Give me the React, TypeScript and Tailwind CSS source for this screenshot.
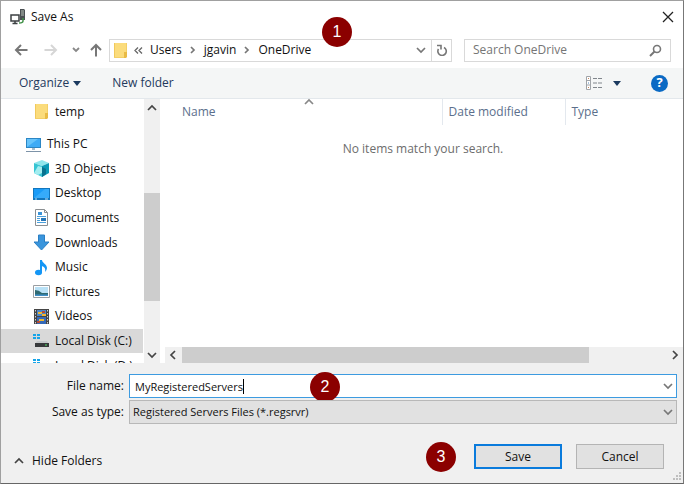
import type { ReactNode } from "react";

interface TreeItem {
    label: string;
    icon: ReactNode;
    selected?: boolean;
}

function FolderIcon() {
    return (
        <svg width="17" height="17" viewBox="0 0 17 17">
            <path d="M2 1h12v15H2z" fill="#fbdc7c" />
            <path d="M2 1h1v15H2z" fill="#f1c95c" />
            <path d="M2 15h10v1H2zM14 1h1v9h-1z" fill="#f3cf68" />
            <path d="M12 10h3v5l-1 1h-2z" fill="#e9bb45" />
        </svg>
    );
}

function ServerIcon() {
    return (
        <svg width="16" height="16" viewBox="0 0 16 16">
            <path d="M10 0h4l1 1v10h-5z" fill="#4a4f52" />
            <path d="M11 2h3M11 4h3M11 6h3" stroke="#b9c4b9" />
            <path d="M1 6h8v6H1z" fill="#fff" stroke="#3c4043" strokeWidth="1.5" />
            <path d="M2.500 14.500h5M5 12v2" stroke="#3c4043" strokeWidth="1.500" />
            <path d="M13 9v3q0 2-4 2" fill="none" stroke="#43934a" strokeWidth="1.500" />
        </svg>
    );
}

function PcIcon() {
    return (
        <svg width="17" height="17" viewBox="0 0 17 17">
            <path d="M1 2h15v10H1z" fill="#2c86c4" />
            <path d="M2 3h13v8H2z" fill="#3fabf5" />
            <path d="M2 11V3h11z" fill="#67c4fb" />
            <path d="M7 12h3v2H7z" fill="#a8bccb" />
            <path d="M1 15.500h15" stroke="#7d93a8" />
        </svg>
    );
}

function CubeIcon() {
    return (
        <svg width="17" height="17" viewBox="0 0 17 17">
            <path d="M1 3l8-3 7 3-7 3z" fill="#8fe6ec" />
            <path d="M1 3l8 3v11l-8-4z" fill="#36c5d3" />
            <path d="M9 6l7-3v10l-7 4z" fill="#0999b5" />
            <path d="M1 13l4-7 4 1v6l-4 2z" fill="#a3edf0" />
            <path d="M9 7l4 2v5l-4 3z" fill="#08728f" />
        </svg>
    );
}

function DesktopIcon() {
    return (
        <svg width="17" height="17" viewBox="0 0 17 17">
            <path d="M0 3h17v12H0z" fill="#1276bd" />
            <path d="M1 4h15v9H1z" fill="#199bf7" />
            <path d="M1 13L12 4h4v9z" fill="#36abfa" />
            <path d="M2 14h2M12 14h3" stroke="#b7dff8" />
        </svg>
    );
}

function DocumentIcon() {
    return (
        <svg width="17" height="17" viewBox="0 0 17 17">
            <path d="M2.500 .5h9l3 3v13h-12z" fill="#fff" stroke="#8b8f92" />
            <path d="M11.500 .5v3h3" fill="none" stroke="#8b8f92" />
            <path d="M5 3h4v3H5z" fill="#3c94d8" />
            <path d="M4 7.500h9M4 9.500h3M4 11.500h3M4 13.500h9" stroke="#4ba0dc" />
            <path d="M8 9h5v3H8z" fill="#2676b8" />
        </svg>
    );
}

function DownloadIcon() {
    return (
        <svg width="17" height="17" viewBox="0 0 17 17">
            <path d="M5.500 1h6v7h4.500L8.500 16 1 8h4.500z" fill="#3a95dc" stroke="#2a7fc4" />
        </svg>
    );
}

function MusicIcon() {
    return (
        <svg width="17" height="17" viewBox="0 0 17 17">
            <ellipse cx="5.500" cy="13.500" rx="3.500" ry="2.700" fill="#1496f5" />
            <path d="M7 1h2c0 3 5 4 5 8q0 2-2 4c1-4-1-5-3-6v7H7z" fill="#1496f5" />
        </svg>
    );
}

function PictureIcon() {
    return (
        <svg width="17" height="17" viewBox="0 0 17 17">
            <path d="M.5 2.500h16v12H.5z" fill="#fff" stroke="#999ea2" />
            <path d="M2 4h13v9H2z" fill="#b9e1f6" />
            <path d="M2 7q4 0 7 3h6v3H2z" fill="#2f6a72" />
            <path d="M2 11.500h13V13H2z" fill="#3f8fc8" />
        </svg>
    );
}

function VideoIcon() {
    return (
        <svg width="17" height="17" viewBox="0 0 17 17">
            <path d="M1 1h15v15H1z" fill="#454545" />
            <path d="M2.500 2v14M14.500 2v14" stroke="#cfcfcf" strokeDasharray="1.500 1.500" />
            <path d="M4 2h9v6H4z" fill="#4b86c9" />
            <path d="M4 9h9v7H4z" fill="#3569b8" />
            <path d="M5 4h4v2H5zM9 6h4v2H9zM6 11h5v2H6z" fill="#f0b833" />
            <path d="M9 3h3v2H9zM4 13h3v2H4z" fill="#b44a36" />
        </svg>
    );
}

function DiskIcon() {
    return (
        <svg width="17" height="17" viewBox="0 0 17 17">
            <path d="M0 2h3v2H0zM4 2h3v2H4zM0 5h3v2H0zM4 5h3v2H4z" fill="#16a5e9" />
            <path d="M4 9h10l2 3H2z" fill="#c5c8ca" />
            <path d="M2 11h14v4H2z" fill="#37393b" />
            <path d="M12 13h2" stroke="#55e06a" />
        </svg>
    );
}

function Chevron({ d, className }: { d: string; className: string }) {
    return (
        <svg width="10" height="10" viewBox="0 0 10 10" className={className}>
            <path d={d} fill="none" stroke="currentColor" strokeWidth="1.700" />
        </svg>
    );
}

const UP = "M1 7l4-4 4 4";
const DOWN = "M1 3l4 4 4-4";
const LEFT = "M7 1L3 5l4 4";
const RIGHT = "M3 1l4 4-4 4";

function StepBadge({ step, className }: { step: number; className: string }) {
    return (
        <span
            className={`flex size-[30px] items-center justify-center rounded-full bg-[#8b0000] font-['Liberation_Sans',sans-serif] text-base text-white ${className}`}
        >
            {step}
        </span>
    );
}

const pcItems: TreeItem[] = [
    { label: "3D Objects", icon: <CubeIcon /> },
    { label: "Desktop", icon: <DesktopIcon /> },
    { label: "Documents", icon: <DocumentIcon /> },
    { label: "Downloads", icon: <DownloadIcon /> },
    { label: "Music", icon: <MusicIcon /> },
    { label: "Pictures", icon: <PictureIcon /> },
    { label: "Videos", icon: <VideoIcon /> },
    { label: "Local Disk (C:)", icon: <DiskIcon />, selected: true },
];

function TreeRow({ label, icon, selected }: TreeItem) {
    return (
        <li className={`flex flex-1 items-center gap-[5px] pl-8 whitespace-nowrap ${selected ? "bg-[#d9d9d9]" : ""}`}>
            {icon}
            {label}
        </li>
    );
}

function TitleBar() {
    return (
        <header className="flex h-[31px] shrink-0 items-center pr-2 pl-[9px]">
            <ServerIcon />
            <h1 className="ml-[5px]">Save As</h1>
            <button aria-label="Close" className="ml-auto text-[#222]">
                <svg width="14" height="14" viewBox="0 0 14 14">
                    <path d="M2 2l10 10M12 2L2 12" stroke="currentColor" strokeWidth="1.300" />
                </svg>
            </button>
        </header>
    );
}

function NavigationBar() {
    return (
        <nav className="flex h-9 shrink-0 items-center pr-3 pl-[13px]">
            <button aria-label="Back" className="text-[#777]">
                <svg width="14" height="14" viewBox="0 0 14 14">
                    <path d="M13.500 7H2M7 2L2 7l5 5" fill="none" stroke="currentColor" strokeWidth="2" />
                </svg>
            </button>
            <button aria-label="Forward" className="ml-4 text-[#d6d6d6]">
                <svg width="14" height="14" viewBox="0 0 14 14">
                    <path d="M.5 7H12M7 2l5 5-5 5" fill="none" stroke="currentColor" strokeWidth="2" />
                </svg>
            </button>
            <button aria-label="Recent locations" className="ml-3 text-[#888]">
                <svg width="12" height="12" viewBox="0 0 12 12">
                    <path d="M3 4l3 3 3-3" fill="none" stroke="currentColor" strokeWidth="1.800" />
                </svg>
            </button>
            <button aria-label="Up" className="ml-[7px] text-[#777]">
                <svg width="14" height="14" viewBox="0 0 14 14">
                    <path d="M7 13.500V2M2 7l5-5 5 5" fill="none" stroke="currentColor" strokeWidth="2" />
                </svg>
            </button>
            <div className="relative ml-[6px] flex h-[23px] min-w-0 flex-1 items-center border border-[#d9d9d9] pl-[2px]">
                <FolderIcon />
                <svg width="9" height="9" viewBox="0 0 9 9" className="ml-[5px] text-[#666]">
                    <path d="M4 1.500l-3 3 3 3M8 1.500l-3 3 3 3" fill="none" stroke="currentColor" strokeWidth="1.300" />
                </svg>
                <button className="ml-[7px]">Users</button>
                <Chevron d="M3 2l3 3-3 3" className="mx-[6px] text-[#777]" />
                <button>jgavin</button>
                <Chevron d="M3 2l3 3-3 3" className="mx-[6px] text-[#777]" />
                <button>OneDrive</button>
                <button aria-label="Previous locations" className="mr-[5px] ml-auto text-[#777]">
                    <Chevron d={DOWN} className="" />
                </button>
                <button aria-label="Refresh" className="flex h-full w-5 items-center justify-center border-l border-[#d9d9d9] text-[#777]">
                    <svg width="12" height="12" viewBox="0 0 12 12">
                        <path d="M1 1.500h4v4M8 3.500a4.200 4.200 0 1 1-5.500 1.500" fill="none" stroke="currentColor" strokeWidth="1.600" />
                    </svg>
                </button>
                <StepBadge step={1} className="absolute -top-[23px] left-[212px]" />
            </div>
            <div className="ml-3 flex h-[23px] w-[207px] shrink-0 items-center border border-[#d9d9d9] px-2">
                <input
                    aria-label="Search OneDrive"
                    placeholder="Search OneDrive"
                    className="w-full min-w-0 outline-none placeholder:text-[#757575]"
                />
                <svg width="13" height="13" viewBox="0 0 13 13" className="shrink-0 text-[#777]">
                    <circle cx="8" cy="5" r="3.500" fill="none" stroke="currentColor" strokeWidth="1.600" />
                    <path d="M5.500 7.500L1 12" stroke="currentColor" strokeWidth="1.900" />
                </svg>
            </div>
        </nav>
    );
}

function Toolbar() {
    return (
        <div className="flex h-[31px] shrink-0 items-center border-b border-[#e3e8ec] bg-[#f4f6f6] pr-[15px] pl-[18px] text-[#23395d]">
            <button className="flex items-center gap-1">
                Organize
                <svg width="8" height="5" viewBox="0 0 8 5">
                    <path d="M0 0h8L4 5z" fill="#1b3a5f" />
                </svg>
            </button>
            <button className="ml-[31px]">New folder</button>
            <button aria-label="Change your view" className="ml-auto flex items-center gap-[10px]">
                <svg width="17" height="14" viewBox="0 0 17 14">
                    <path d="M.5 .5h4v13h-4zM.5 4.500h4M.5 9h4" fill="#fff" stroke="#a0a4a8" />
                    <path d="M2 2.500h1M2 11.500h1" stroke="#c7875a" />
                    <path d="M2 7h1" stroke="#4c86bd" />
                    <path d="M7 2.500h4M12 2.500h4M7 7h4M12 7h4M7 11.500h4M12 11.500h4" stroke="#80868c" />
                </svg>
                <svg width="8" height="5" viewBox="0 0 8 5">
                    <path d="M0 0h8L4 5z" fill="#1b3a5f" />
                </svg>
            </button>
            <button
                aria-label="Help"
                className="ml-[30px] flex size-[17px] items-center justify-center rounded-full bg-[#0a6ac4] text-[13px] font-bold text-white"
            >
                ?
            </button>
        </div>
    );
}

function FolderTree() {
    return (
        <aside className="flex w-[162px] shrink-0 pr-[3px]">
            <div className="min-w-0 flex-1 overflow-hidden pr-px">
                <ul className="flex h-[25px] flex-col">
                    <TreeRow label="temp" icon={<FolderIcon />} />
                </ul>
                <ul className="mt-2 flex h-[221px] flex-col">
                    <li className="flex flex-1 items-center gap-[5px] pl-6">
                        <PcIcon />
                        This PC
                    </li>
                    {pcItems.map((item) => (
                        <TreeRow key={item.label} {...item} />
                    ))}
                </ul>
                <ul className="flex h-[25px] flex-col">
                    <TreeRow label="Local Disk (D:)" icon={<DiskIcon />} />
                </ul>
            </div>
            <div className="flex w-4 flex-col items-center bg-[#f0f0f0] pt-1 pb-[3px] text-[#444]">
                <Chevron d={UP} className="" />
                <div className="mt-20 h-[108px] w-full bg-[#cdcdcd]" />
                <Chevron d={DOWN} className="mt-auto" />
            </div>
        </aside>
    );
}

function FileList() {
    return (
        <main className="flex min-w-0 flex-1 flex-col">
            <table className="w-full table-fixed">
                <thead className="text-left text-[#5b6f8c]">
                    <tr className="h-[26px]">
                        <th className="relative w-[279px] border-r border-[#e3e8ee] pl-[19px] font-normal">
                            Name
                            <Chevron d="M1 6l4-4 4 4" className="absolute -top-px left-[141px] text-[#888]" />
                        </th>
                        <th className="w-[123px] border-r border-[#e3e8ee] pl-[6px] font-normal">Date modified</th>
                        <th className="pl-[6px] font-normal">Type</th>
                    </tr>
                </thead>
                <tbody>
                    <tr>
                        <td colSpan={3} className="pt-4 text-center text-[#6d6d6d]">
                            No items match your search.
                        </td>
                    </tr>
                </tbody>
            </table>
            <div className="mt-auto ml-[2px] flex h-4 items-center bg-[#f0f0f0] px-[3px] text-[#444]">
                <Chevron d={LEFT} className="" />
                <div className="mr-auto ml-1 h-full w-[407px] bg-[#cdcdcd]" />
                <Chevron d={RIGHT} className="" />
            </div>
        </main>
    );
}

function FileForm() {
    return (
        <form className="shrink-0 bg-[#f0f0f0] pt-[11px] pr-[6px]" onSubmit={(e) => e.preventDefault()}>
            <div className="flex items-center">
                <label htmlFor="file-name" className="w-[128px] shrink-0 pr-[5px] text-right">
                    File name:
                </label>
                <div className="relative flex h-6 flex-1 items-center border border-[#3d9be0] bg-white pr-[3px]">
                    <input
                        id="file-name"
                        defaultValue="MyRegisteredServers"
                        className="h-full min-w-0 flex-1 pl-[5px] text-[11px] outline-none"
                    />
                    <span className="absolute top-1 left-[113px] h-[15px] w-px bg-black" />
                    <button type="button" aria-label="Previous file names" className="text-[#777]">
                        <Chevron d={DOWN} className="" />
                    </button>
                    <StepBadge step={2} className="absolute -top-[3px] left-[180px]" />
                </div>
            </div>
            <div className="mt-[2px] flex items-center">
                <label htmlFor="file-type" className="w-[128px] shrink-0 pr-[5px] text-right">
                    Save as type:
                </label>
                <div className="relative h-6 flex-1">
                    <select
                        id="file-type"
                        className="h-full w-full appearance-none border border-[#b8b8b8] bg-[#e1e1e1] pl-[3px] text-[11px] outline-none"
                    >
                        <option>Registered Servers Files (*.regsrvr)</option>
                    </select>
                    <Chevron d={DOWN} className="pointer-events-none absolute top-[7px] right-1 text-[#777]" />
                </div>
            </div>
            <div className="flex h-[59px] items-center px-[13px] pt-[6px]">
                <button type="button" className="flex items-center gap-2 pt-2">
                    <Chevron d={UP} className="text-[#444]" />
                    Hide Folders
                </button>
                <StepBadge step={3} className="mr-[18px] ml-auto" />
                <button type="submit" className="h-[25px] w-[88px] border-2 border-[#0a7bdc] bg-[#e1e1e1]">
                    Save
                </button>
                <button type="button" className="ml-[14px] h-[25px] w-[88px] border border-[#b4b4b4] bg-[#e1e1e1]">
                    Cancel
                </button>
            </div>
        </form>
    );
}

function ResizeGrip() {
    return (
        <svg width="10" height="10" viewBox="0 0 10 10" className="absolute right-px bottom-px">
            <path d="M7 0h2v2H7zM4 3h2v2H4zM7 3h2v2H7zM1 6h2v2H1zM4 6h2v2H4zM7 6h2v2H7z" fill="#bfbfbf" />
        </svg>
    );
}

export default function App() {
    return (
        <div className="relative flex h-screen flex-col border border-t-[#a0a0a0] border-r-[#777] border-b-[#666] border-l-[#a0a0a0] bg-white font-['Open_Sans','Noto_Sans',sans-serif] text-xs text-[#111]">
            <TitleBar />
            <NavigationBar />
            <Toolbar />
            <div className="flex min-h-0 flex-1">
                <FolderTree />
                <FileList />
            </div>
            <FileForm />
            <ResizeGrip />
        </div>
    );
}
